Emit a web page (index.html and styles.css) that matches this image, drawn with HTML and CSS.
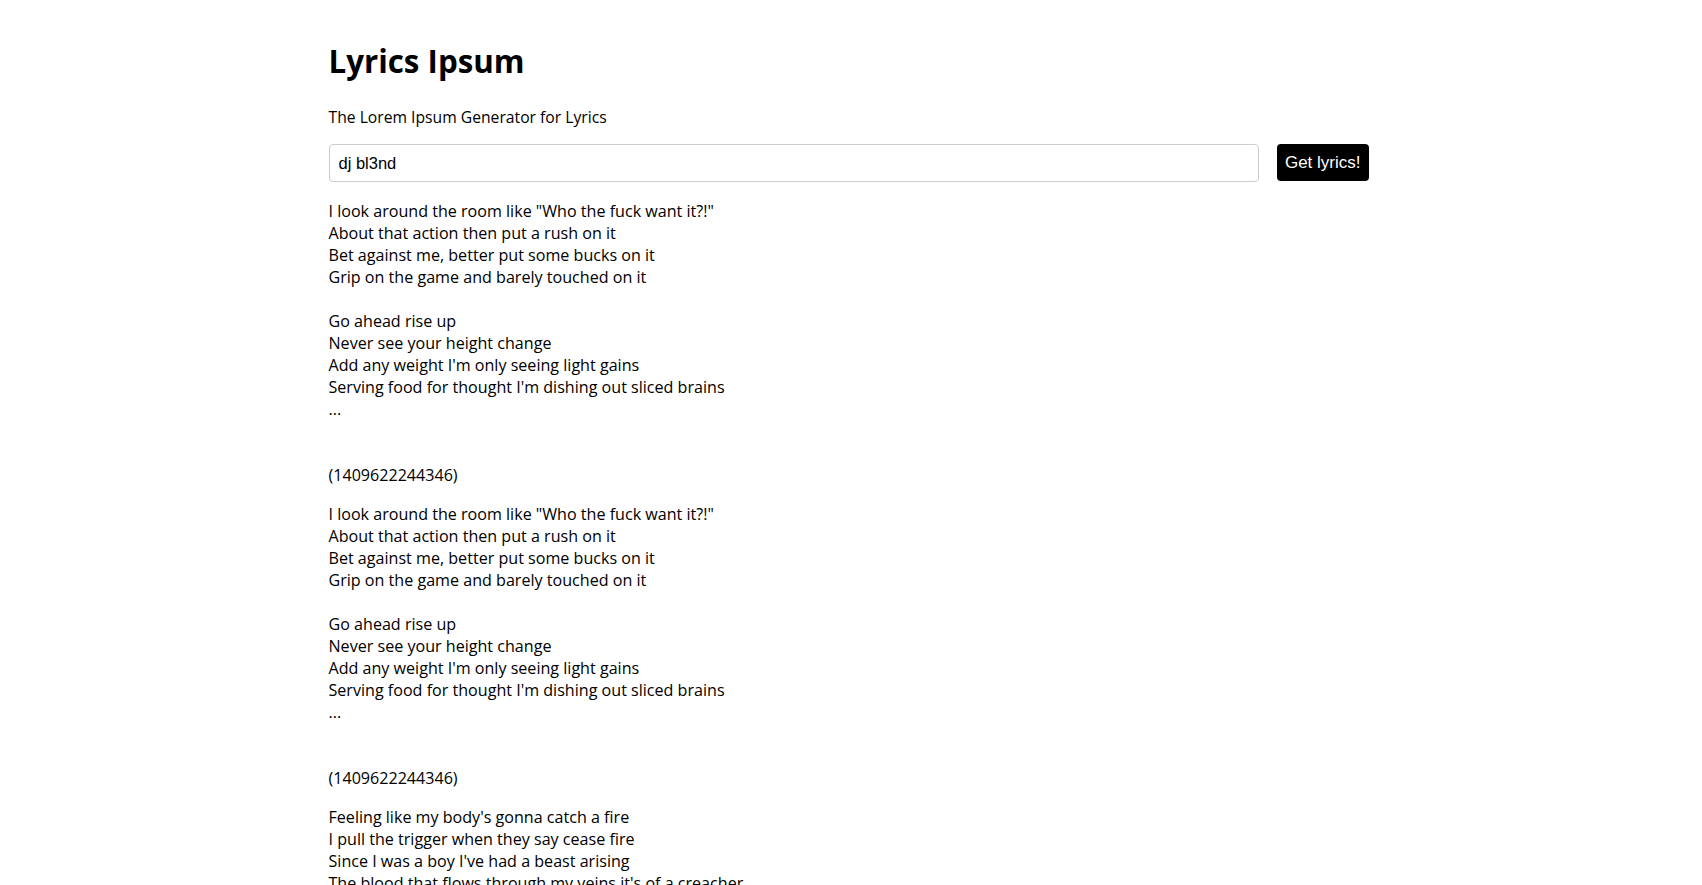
FILE: index.html
```html
<!DOCTYPE html>
<html lang="en">
<head>
<meta charset="utf-8">
<title>Lyrics Ipsum</title>
<link rel="stylesheet" href="styles.css">
</head>
<body>
<div class="page">
  <h1 class="title">Lyrics Ipsum</h1>
  <p class="subtitle">The Lorem Ipsum Generator for Lyrics</p>
  <form class="search">
    <input class="search-input" type="text" value="dj bl3nd">
    <button class="search-btn" type="button">Get lyrics!</button>
  </form>
  <div class="results">
    <p class="entry">I look around the room like "Who the fuck want it?!"<br>About that action then put a rush on it<br>Bet against me, better put some bucks on it<br>Grip on the game and barely touched on it<br><br>Go ahead rise up<br>Never see your height change<br>Add any weight I'm only seeing light gains<br>Serving food for thought I'm dishing out sliced brains<br>...<br><br><br>(1409622244346)</p>
    <p class="entry">I look around the room like "Who the fuck want it?!"<br>About that action then put a rush on it<br>Bet against me, better put some bucks on it<br>Grip on the game and barely touched on it<br><br>Go ahead rise up<br>Never see your height change<br>Add any weight I'm only seeing light gains<br>Serving food for thought I'm dishing out sliced brains<br>...<br><br><br>(1409622244346)</p>
    <p class="entry">Feeling like my body's gonna catch a fire<br>I pull the trigger when they say cease fire<br>Since I was a boy I've had a beast arising<br>The blood that flows through my veins it's of a creacher<br><br>Go ahead rise up<br>Never see your height change<br>Add any weight I'm only seeing light gains<br>Serving food for thought I'm dishing out sliced brains<br>...<br><br><br>(1409622244346)</p>
  </div>
</div>
</body>
</html>
```

FILE: styles.css
```css
html, body {
  margin: 0;
  padding: 0;
  background: #fff;
}
body {
  font-family: "Open Sans", "Noto Sans", sans-serif;
  color: #000;
  padding-right: 5px;
}
.page {
  width: 1040px;
  margin: 0 auto;
  padding-top: 39px;
}
.title {
  margin: 0;
  font-size: 31.3px;
  line-height: 44px;
  font-weight: 700;
}
.subtitle {
  margin: 23px 0 0;
  font-size: 15.7px;
  line-height: 22px;
}
.search {
  display: flex;
  gap: 18px;
  margin: 16px 0 0;
}
.search-input {
  flex: 1;
  box-sizing: border-box;
  height: 38px;
  margin: 0;
  padding: 0 9px;
  border: 1px solid #ccc;
  border-radius: 4px;
  font-family: "Liberation Sans", Arial, sans-serif;
  font-size: 16.5px;
  color: #000;
  outline: none;
}
.search-btn {
  box-sizing: border-box;
  height: 37px;
  margin: 0;
  padding: 0 8px;
  border: none;
  border-radius: 4px;
  background: #000;
  color: #fff;
  font-family: "Liberation Sans", Arial, sans-serif;
  font-size: 17px;
}
.results {
  margin-top: 18px;
}
.entry {
  margin: 0 0 17px;
  font-size: 16.1px;
  line-height: 22px;
}
```
